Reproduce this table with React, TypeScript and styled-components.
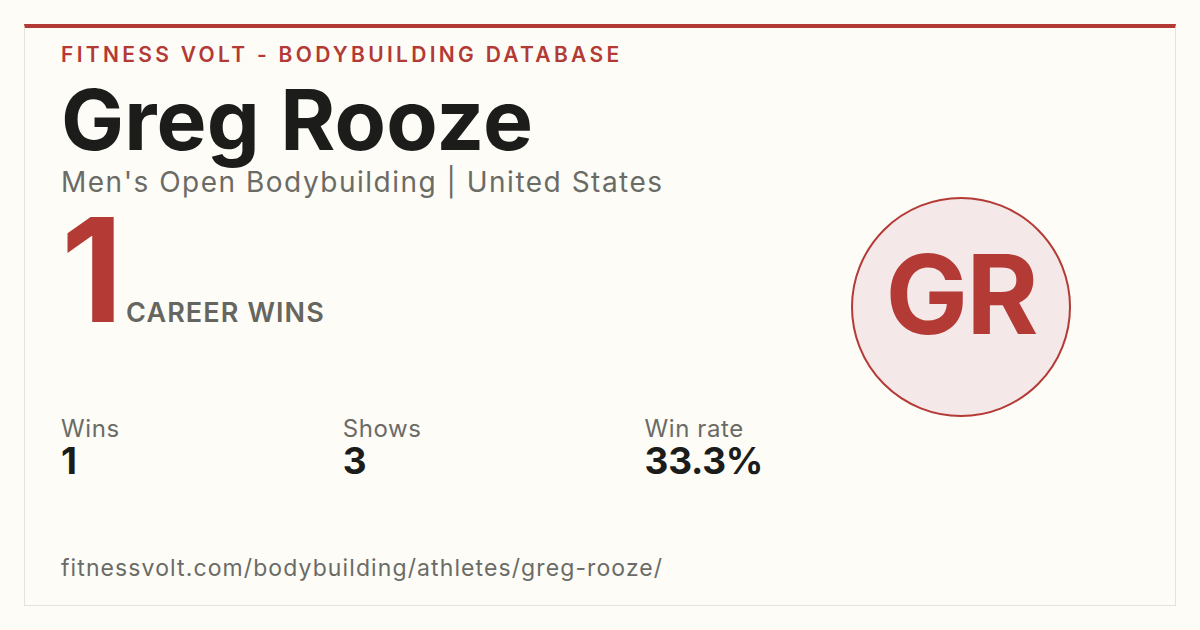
import React from "react";
import styled, { createGlobalStyle } from "styled-components";

const Global = createGlobalStyle`
  html, body { margin: 0; padding: 0; background: #fdfcf7; }
  body { font-family: Inter, "Noto Sans", "DejaVu Sans", sans-serif; }
`;

const Page = styled.div`
  width: 1200px;
  height: 630px;
  box-sizing: border-box;
  padding: 24px;
  background: #fdfcf7;
`;

const Card = styled.div`
  box-sizing: border-box;
  height: 582px;
  border: 1px solid #e6e2da;
  border-top: 4px solid #b33a35;
  display: flex;
  flex-direction: row;
`;

const Left = styled.div`
  flex: 1;
  display: flex;
  flex-direction: column;
  padding: 16px 0 25px 36px;
`;

const Right = styled.div`
  width: 220px;
  padding: 169px 104px 0 0;
`;

const Kicker = styled.div`
  font-size: 21px;
  line-height: 1;
  font-weight: 600;
  letter-spacing: 3.3px;
  color: #b33a35;
  text-transform: uppercase;
`;

const Name = styled.h1`
  margin: 13px 0 0;
  font-size: 84px;
  line-height: 1;
  font-weight: 700;
  letter-spacing: 0.2px;
  color: #1c1c1a;
`;

const Subtitle = styled.div`
  margin-top: 6px;
  font-size: 28px;
  line-height: 1;
  font-weight: 400;
  letter-spacing: 1.5px;
  color: #6b6b66;
`;

const Hero = styled.div`
  margin-top: 2px;
  display: flex;
  align-items: baseline;
  gap: 7px;
`;

const BigNumber = styled.div`
  font-size: 144px;
  line-height: 1;
  font-weight: 700;
  color: #b33a35;
  letter-spacing: -4px;
`;

const HeroLabel = styled.div`
  font-size: 27px;
  line-height: 1;
  font-weight: 600;
  letter-spacing: 1.1px;
  color: #666660;
`;

const Stats = styled.div`
  margin-top: 75px;
  display: flex;
  gap: 223px;
`;

const Stat = styled.div`
  display: flex;
  flex-direction: column;
  gap: 1px;
`;

const StatLabel = styled.div`
  font-size: 24px;
  line-height: 1;
  letter-spacing: 0.6px;
  color: #6b6b66;
`;

const StatValue = styled.div`
  font-size: 37px;
  line-height: 1;
  font-weight: 700;
  letter-spacing: -0.3px;
  color: #1c1c1a;
`;

const Url = styled.div`
  margin-top: auto;
  font-size: 23px;
  line-height: 1;
  letter-spacing: 1.1px;
  color: #6b6b66;
`;

const Avatar = styled.div`
  box-sizing: border-box;
  width: 220px;
  height: 220px;
  border-radius: 50%;
  border: 2px solid #b33a35;
  background: #f4e8e8;
  display: flex;
  align-items: center;
  justify-content: center;
  padding-bottom: 26px;
  font-size: 110px;
  line-height: 1;
  font-weight: 700;
  color: #b33a35;
  letter-spacing: -2px;
`;

const stats = [
  { label: "Wins", value: "1" },
  { label: "Shows", value: "3" },
  { label: "Win rate", value: "33.3%" },
];

export default function App() {
  return (
    <Page>
      <Global />
      <Card>
        <Left>
          <Kicker>Fitness Volt - Bodybuilding Database</Kicker>
          <Name>Greg Rooze</Name>
          <Subtitle>Men's Open Bodybuilding | United States</Subtitle>
          <Hero>
            <BigNumber>1</BigNumber>
            <HeroLabel>CAREER WINS</HeroLabel>
          </Hero>
          <Stats>
            {stats.map((s) => (
              <Stat key={s.label}>
                <StatLabel>{s.label}</StatLabel>
                <StatValue>{s.value}</StatValue>
              </Stat>
            ))}
          </Stats>
          <Url>fitnessvolt.com/bodybuilding/athletes/greg-rooze/</Url>
        </Left>
        <Right>
          <Avatar>GR</Avatar>
        </Right>
      </Card>
    </Page>
  );
}
